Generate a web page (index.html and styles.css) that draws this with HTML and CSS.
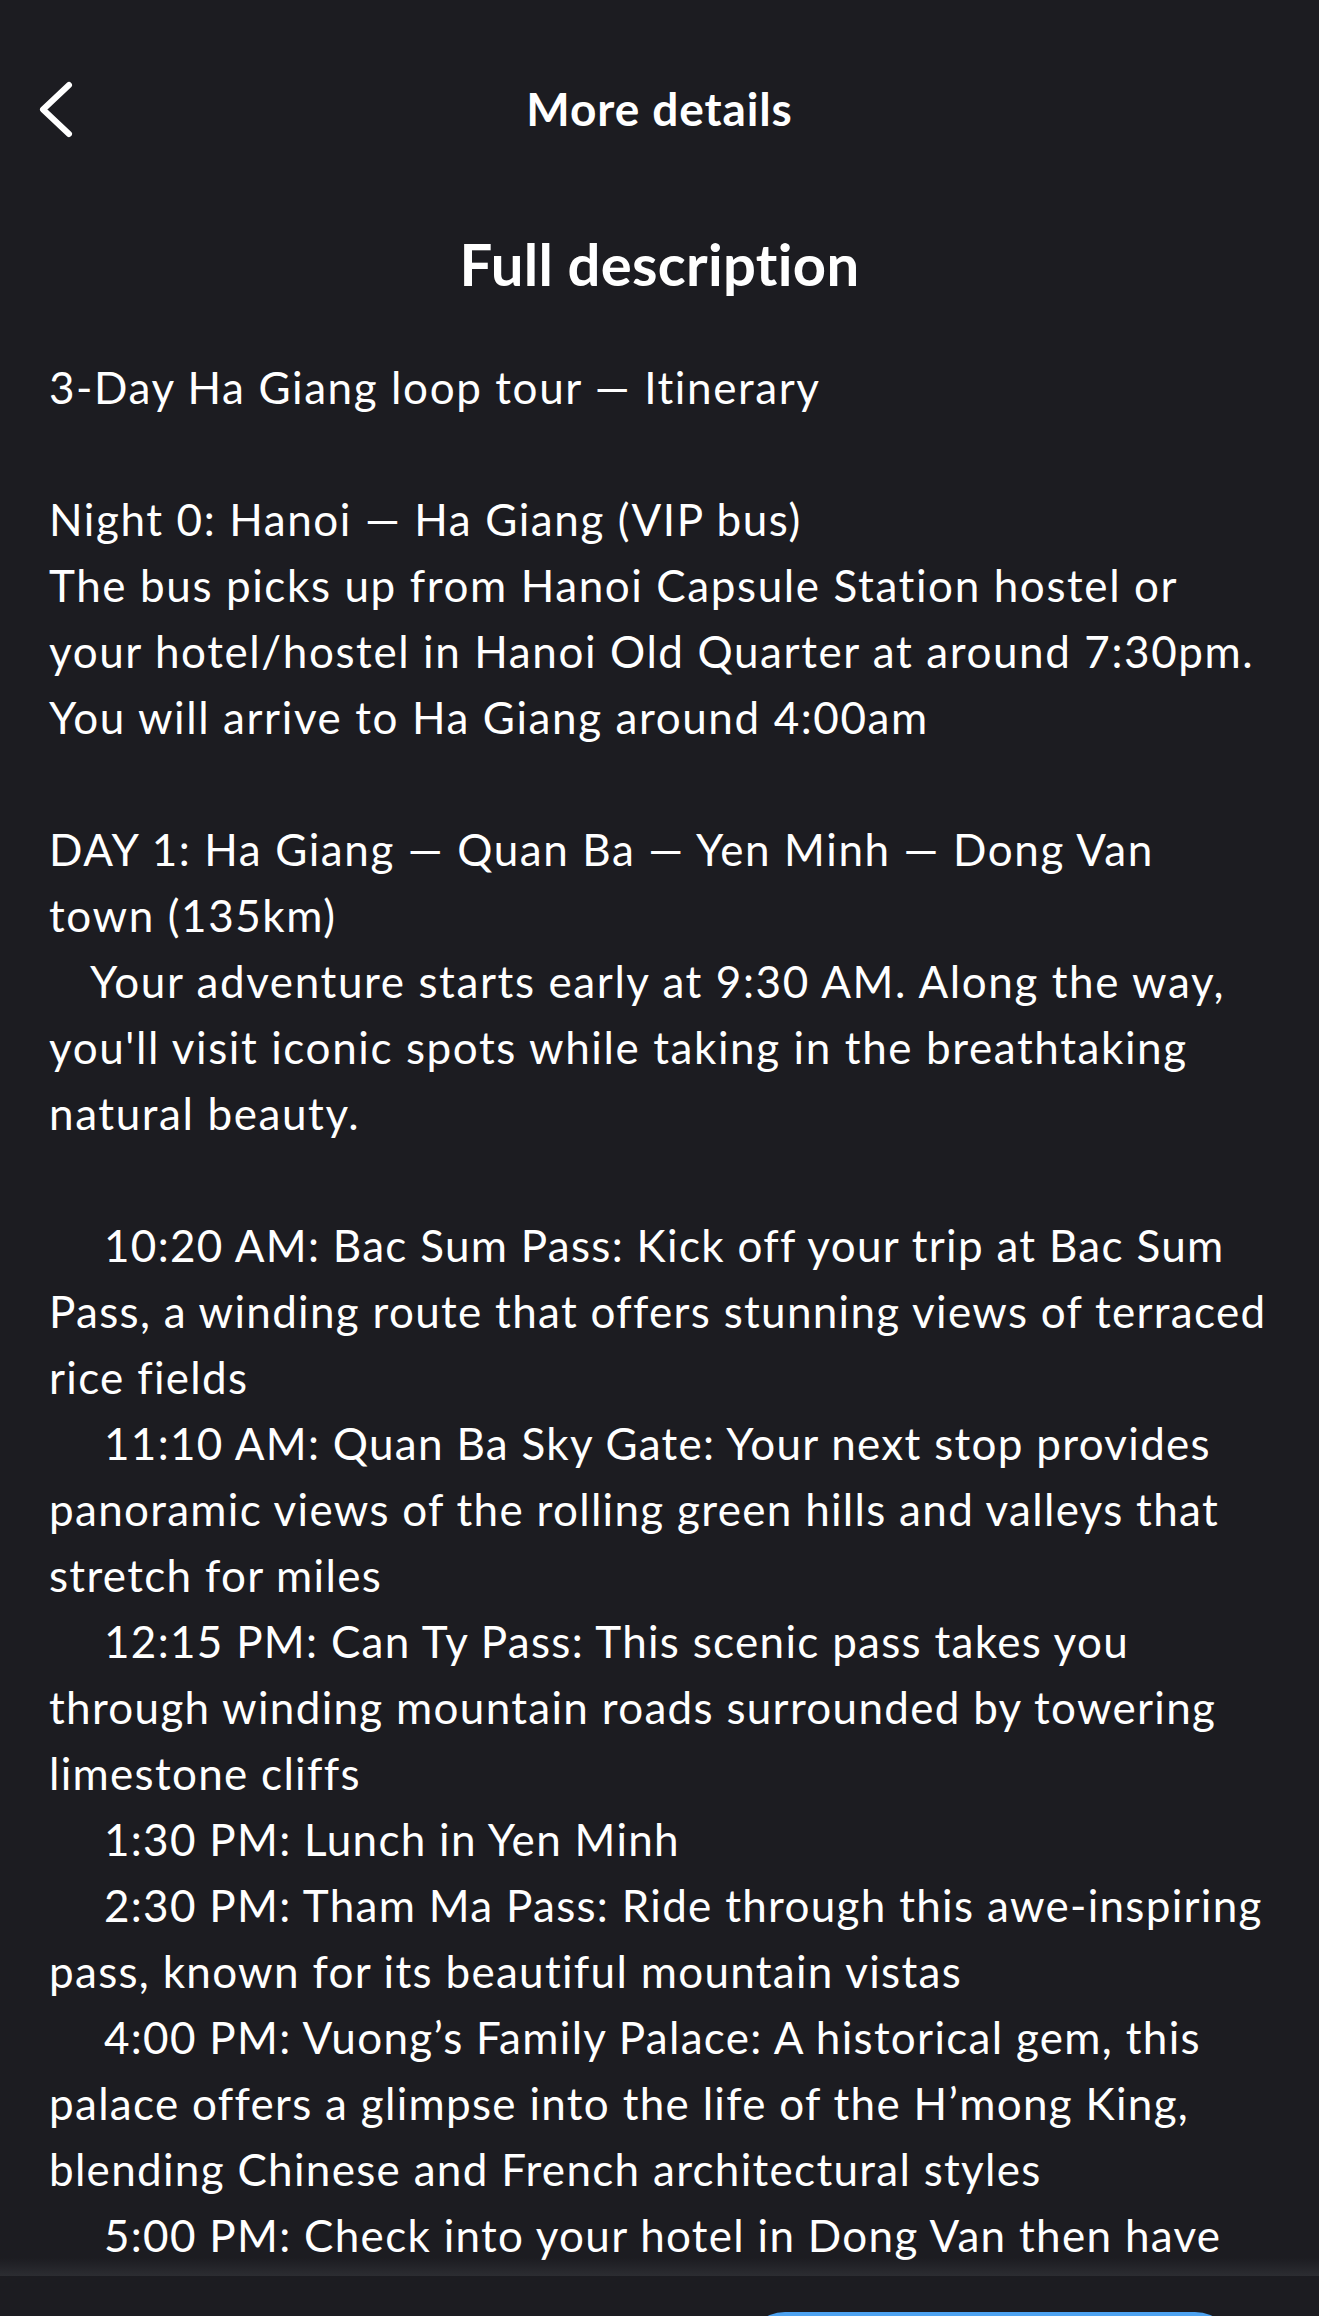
FILE: index.html
```html
<!DOCTYPE html>
<html lang="en">
<head>
<meta charset="utf-8">
<title>More details</title>
<link rel="stylesheet" href="styles.css">
</head>
<body>
<div class="screen">
  <header class="topbar">
    <button class="back" aria-label="Back">
      <svg width="40" height="60" viewBox="0 0 40 60"><polyline points="33,5 7,29.5 33,54" fill="none" stroke="#fff" stroke-width="6" stroke-linecap="round" stroke-linejoin="round"/></svg>
    </button>
    <h1 class="topbar-title">More details</h1>
    <span class="spacer"></span>
  </header>
  <main class="content">
    <h2 class="section-title">Full description</h2>
    <div class="desc">
      <p class="line">3-Day Ha Giang loop tour — Itinerary</p>
      <p class="gap"></p>
      <p class="line">Night 0: Hanoi — Ha Giang (VIP bus)</p>
      <p class="line">The bus picks up from Hanoi Capsule Station hostel or your hotel/hostel in Hanoi Old Quarter at around 7:30pm.</p>
      <p class="line">You will arrive to Ha Giang around 4:00am</p>
      <p class="gap"></p>
      <p class="line">DAY 1: Ha Giang — Quan Ba — Yen Minh — Dong Van town (135km)</p>
      <p class="line indent-s">Your adventure starts early at 9:30 AM. Along the way, you'll visit iconic spots while taking in the breathtaking natural beauty.</p>
      <p class="gap"></p>
      <p class="line indent">10:20 AM: Bac Sum Pass: Kick off your trip at Bac Sum Pass, a winding route that offers stunning views of terraced rice fields</p>
      <p class="line indent">11:10 AM: Quan Ba Sky Gate: Your next stop provides panoramic views of the rolling green hills and valleys that stretch for miles</p>
      <p class="line indent">12:15 PM: Can Ty Pass: This scenic pass takes you through winding mountain roads surrounded by towering limestone cliffs</p>
      <p class="line indent">1:30 PM: Lunch in Yen Minh</p>
      <p class="line indent">2:30 PM: Tham Ma Pass: Ride through this awe-inspiring pass, known for its beautiful mountain vistas</p>
      <p class="line indent">4:00 PM: Vuong’s Family Palace: A historical gem, this palace offers a glimpse into the life of the H’mong King, blending Chinese and French architectural styles</p>
      <p class="line indent">5:00 PM: Check into your hotel in Dong Van then have dinner and enjoy the evening in the old town</p>
    </div>
  </main>
  <footer class="bottombar">
    <div class="bottombar-inner">
      <button class="cta" aria-label="Book now"></button>
    </div>
  </footer>
</div>
</body>
</html>
```
FILE: styles.css
```css
* { box-sizing: border-box; }
html, body {
  margin: 0;
  padding: 0;
  background: #1c1c21;
}
body {
  font-family: "Lato", "Noto Sans", sans-serif;
  color: #fff;
}
.screen {
  height: 2316px;
  display: flex;
  flex-direction: column;
  overflow: hidden;
  background: #1c1c21;
}
.topbar {
  flex: 0 0 218px;
  display: grid;
  grid-template-columns: 1fr auto 1fr;
  align-items: center;
}
.back {
  justify-self: start;
  margin-left: 36px;
  margin-top: 1px;
  padding: 0;
  border: 0;
  background: none;
  width: 40px;
  height: 60px;
  display: block;
}
.back svg { display: block; }
.topbar-title {
  margin: 0;
  font-size: 46px;
  font-weight: 700;
  line-height: 60px;
  letter-spacing: 0.9px;
}
.content {
  flex: 1 1 auto;
  min-height: 0;
  overflow: hidden;
  padding: 0 49px;
}
.section-title {
  margin: 0 0 44px;
  text-align: center;
  font-size: 58px;
  font-weight: 700;
  line-height: 92px;
  letter-spacing: 0.3px;
}
.desc { font-size: 44px; line-height: 66px; letter-spacing: 1.6px; }
.line { margin: 0; }
.gap { margin: 0; height: 66px; }
.indent { text-indent: 55px; letter-spacing: 1.3px; }
.indent-s { text-indent: 41px; }
.bottombar {
  flex: 0 0 40px;
  min-height: 0;
  position: relative;
  background: #1c1c21;
}
.bottombar::before {
  content: "";
  position: absolute;
  left: 0; right: 0;
  top: -18px;
  height: 18px;
  background: linear-gradient(to bottom, rgba(44,45,50,0), rgba(44,45,50,1));
}
.bottombar-inner {
  height: 100%;
  overflow: hidden;
  display: flex;
  justify-content: flex-end;
  padding: 36px 84px 0 0;
}
.cta {
  flex: 0 0 490px;
  height: 110px;
  border: 0;
  border-radius: 40px;
  background: #4ea3f1;
}
```
